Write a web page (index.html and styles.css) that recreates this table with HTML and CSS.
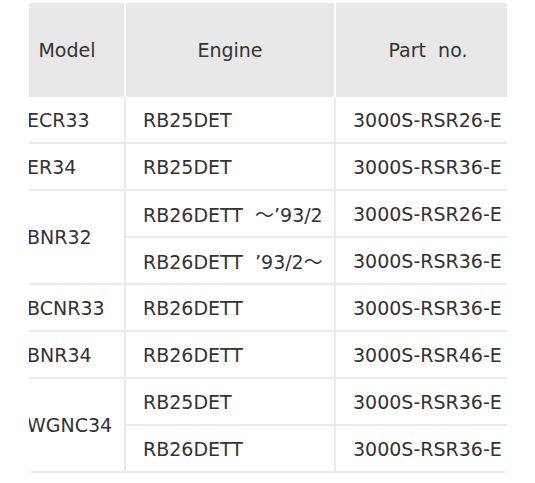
FILE: index.html
```html
<!DOCTYPE html>
<html>
<head>
<meta charset="utf-8">
<link rel="stylesheet" href="styles.css">
</head>
<body>
<div class="scroller">
  <table class="spec">
    <thead>
      <tr>
        <th class="c-model">Model</th>
        <th class="c-engine">Engine</th>
        <th class="c-part">Part&nbsp; no.</th>
      </tr>
    </thead>
    <tbody>
      <tr><td>ECR33</td><td>RB25DET</td><td>3000S-RSR26-E</td></tr>
      <tr><td>ER34</td><td>RB25DET</td><td>3000S-RSR36-E</td></tr>
      <tr><td rowspan="2">BNR32</td><td>RB26DETT&nbsp; ～’93/2</td><td>3000S-RSR26-E</td></tr>
      <tr><td>RB26DETT&nbsp; ’93/2～</td><td>3000S-RSR36-E</td></tr>
      <tr><td>BCNR33</td><td>RB26DETT</td><td>3000S-RSR36-E</td></tr>
      <tr><td>BNR34</td><td>RB26DETT</td><td>3000S-RSR46-E</td></tr>
      <tr><td rowspan="2">WGNC34</td><td>RB25DET</td><td>3000S-RSR36-E</td></tr>
      <tr><td>RB26DETT</td><td>3000S-RSR36-E</td></tr>
    </tbody>
  </table>
</div>
</body>
</html>
```
FILE: styles.css
```css
html, body {
  margin: 0;
  padding: 0;
  background: #fff;
}
body {
  padding-top: 3px;
  font-family: "DejaVu Sans", "Noto Sans CJK JP", sans-serif;
  color: #333;
}
.scroller {
  margin-left: 29px;
  width: 478px;
  overflow: hidden;
}
.spec {
  margin-left: -19px;
  border-collapse: separate;
  border-spacing: 0;
  table-layout: fixed;
  width: 512px;
  font-size: 19px;
}
.c-model { width: 116px; }
.c-engine { width: 210px; }
.c-part { width: 186px; }
.spec th {
  height: 94px;
  padding: 0;
  background: #e8e8e8;
  font-weight: normal;
  text-align: center;
  border-right: 2px solid #fff;
  box-sizing: border-box;
}
.spec td {
  height: 45px;
  padding: 0 0 0 17px;
  white-space: nowrap;
  text-align: left;
  vertical-align: middle;
  border-bottom: 2px solid #ebebeb;
  border-right: 2px solid #ebebeb;
}
```
